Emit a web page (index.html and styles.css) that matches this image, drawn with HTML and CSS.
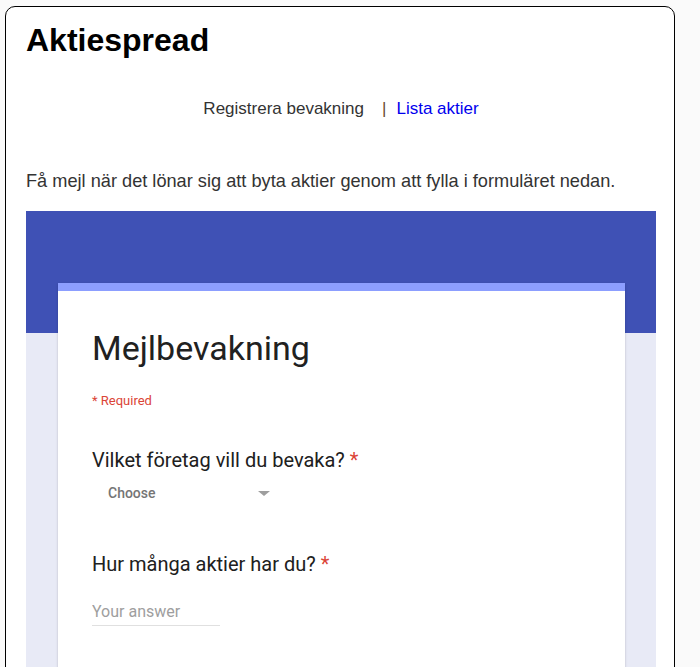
FILE: index.html
```html
<!DOCTYPE html>
<html lang="sv">
<head>
<meta charset="utf-8">
<title>Aktiespread</title>
<link rel="stylesheet" href="styles.css">
</head>
<body>
<div class="page">
  <h1 class="site-title">Aktiespread</h1>
  <nav class="nav">
    <span class="nav-current">Registrera bevakning</span><span class="nav-sep">|</span><a class="nav-link" href="#">Lista aktier</a>
  </nav>
  <p class="intro">Få mejl när det lönar sig att byta aktier genom att fylla i formuläret nedan.</p>
  <div class="form-frame">
    <div class="form-card">
      <div class="form-title">Mejlbevakning</div>
      <div class="required-note">* Required</div>
      <div class="question">
        <div class="q-label">Vilket företag vill du bevaka? <span class="star">*</span></div>
        <div class="select">
          <span class="select-text">Choose</span>
          <span class="select-arrow"></span>
        </div>
      </div>
      <div class="question q2">
        <div class="q-label">Hur många aktier har du? <span class="star">*</span></div>
        <input class="answer" type="text" placeholder="Your answer">
      </div>
    </div>
  </div>
</div>
</body>
</html>
```
FILE: styles.css
```css
html {
  background: #fafafa;
}
body {
  margin: 0;
  font-family: "Liberation Sans", Arial, sans-serif;
}
.page {
  box-sizing: border-box;
  width: 670px;
  margin: 6px 0 0 5px;
  padding: 15px 18px 0 20px;
  border: 1px solid #000;
  border-radius: 10px;
  background: #fff;
}
.site-title {
  margin: 0;
  font: bold 32px/36px "Liberation Sans", Arial, sans-serif;
  color: #000;
}
.nav {
  margin-top: 41px;
  text-align: center;
  font-size: 17px;
  line-height: 20px;
  color: #333;
}
.nav-sep {
  margin: 0 10px 0 18px;
  color: #6a4a30;
}
.nav-link {
  color: #0000ee;
  text-decoration: none;
}
.intro {
  margin: 52px 0 0;
  font-size: 18.2px;
  line-height: 20px;
  color: #333;
}
.form-frame {
  width: 630px;
  margin-top: 20px;
  padding: 72px 31px 0 32px;
  box-sizing: border-box;
  background: linear-gradient(#3f51b5 0, #3f51b5 122px, #e8eaf6 122px);
  font-family: Roboto, "Noto Sans", sans-serif;
}
.form-card {
  background: #fff;
  border-top: 8px solid #8c9eff;
  padding: 37px 34px 80px;
  box-shadow: 0 2px 1px -1px rgba(0,0,0,.2), 0 1px 1px 0 rgba(0,0,0,.14), 0 1px 3px 0 rgba(0,0,0,.12);
}
.form-title {
  font-size: 34px;
  line-height: 40px;
  color: #212121;
}
.required-note {
  margin-top: 25px;
  font-size: 13px;
  line-height: 16px;
  color: #db4437;
}
.question {
  margin-top: 39px;
}
.q2 {
  margin-top: 49px;
}
.q-label {
  font-size: 20px;
  line-height: 24px;
  color: #202020;
}
.star {
  color: #db4437;
}
.select {
  display: flex;
  align-items: center;
  justify-content: space-between;
  width: 178px;
  box-sizing: border-box;
  margin-top: 11px;
  padding-left: 16px;
  height: 20px;
}
.select-text {
  font-size: 14px;
  line-height: 20px;
  font-weight: 500;
  color: #757575;
}
.select-arrow {
  width: 0;
  height: 0;
  border-left: 6px solid transparent;
  border-right: 6px solid transparent;
  border-top: 5px solid #9e9e9e;
}
.answer {
  display: block;
  width: 128px;
  box-sizing: border-box;
  margin: 25px 0 0;
  padding: 0 0 4px;
  border: none;
  border-bottom: 1px solid #e0e0e0;
  outline: none;
  background: transparent;
  font: 16px/20px Roboto, "Noto Sans", sans-serif;
  height: 25px;
  color: #212121;
}
.answer::placeholder {
  color: #9e9e9e;
}
```
